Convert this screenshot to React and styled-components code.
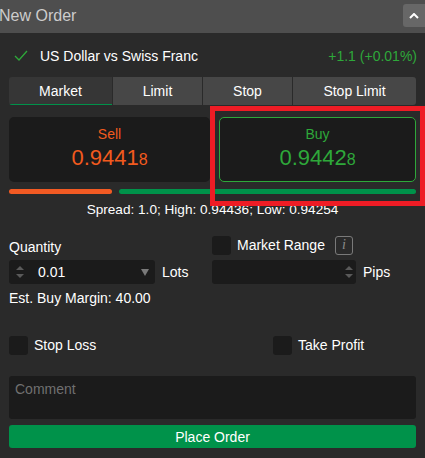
import React from 'react'
import styled, {createGlobalStyle} from 'styled-components'

const GlobalStyle = createGlobalStyle`
  html, body {
    margin: 0;
    padding: 0;
    background: #2a2a2a;
    font-family: "Liberation Sans", Arial, sans-serif;
  }
`

const Panel = styled.div`
  position: relative;
  width: 425px;
  height: 458px;
  background: #2a2a2a;
  color: #ffffff;
  overflow: hidden;
`

const Header = styled.div`
  height: 33px;
  background: #4e4e4e;
  display: flex;
  align-items: center;
  justify-content: space-between;
`

const HeaderTitle = styled.span`
  font-size: 16px;
  color: #cccccc;
  margin-left: -1px;
  margin-top: -1px;
`

const CollapseButton = styled.div`
  width: 22px;
  height: 23px;
  margin-top: -2px;
  background: #676767;
  border-radius: 3px 0 0 3px;
  display: flex;
  align-items: center;
  justify-content: center;
`

const Body = styled.div`
  padding: 0 9px;
`

const PairRow = styled.div`
  height: 44px;
  display: flex;
  align-items: center;
  padding-top: 2px;
  box-sizing: border-box;
`

const PairName = styled.span`
  font-size: 14px;
  margin-left: 12px;
  flex: 1;
`

const Change = styled.span`
  font-size: 14px;
  color: #2ea83a;
  margin-right: -1px;
`

const Tabs = styled.div`
  display: flex;
  gap: 1px;
  height: 28px;
  border-radius: 3px;
  overflow: hidden;
`

const Tab = styled.div`
  width: ${props => props.w}px;
  display: flex;
  align-items: center;
  justify-content: center;
  font-size: 14px;
  background: ${props => props.active ? '#363636' : '#474747'};
  box-shadow: ${props => props.active ? 'inset 0 -1px 0 #00924a' : 'none'};
`

const Prices = styled.div`
  display: flex;
  gap: 9px;
  margin-top: 12px;
`

const PriceBox = styled.div`
  flex: ${props => props.grow};
  height: 65px;
  box-sizing: border-box;
  background: #1b1b1b;
  border-radius: 5px;
  border: 1px solid ${props => props.selected ? '#2ea83a' : 'transparent'};
  color: ${props => props.color};
  display: flex;
  flex-direction: column;
  align-items: center;
  padding-top: 8px;
`

const Side = styled.div`
  font-size: 14px;
`

const Price = styled.div`
  font-size: 22px;
  margin-top: 3px;
`

const PipDigit = styled.span`
  font-size: 16px;
`

const Bars = styled.div`
  display: flex;
  gap: 7px;
  margin-top: 7px;
`

const Bar = styled.div`
  height: 5px;
  border-radius: 3px;
  background: ${props => props.color};
  width: ${props => props.w}px;
  flex: ${props => props.w ? 'none' : '1'};
`

const Spread = styled.div`
  text-align: center;
  font-size: 13.6px;
  margin-top: 8px;
`

const FormGrid = styled.div`
  display: grid;
  grid-template-columns: 203px 1fr;
  margin-top: 18px;
`

const Column = styled.div`
  display: flex;
  flex-direction: column;
`

const Label = styled.div`
  font-size: 14px;
  height: 20px;
  display: flex;
  align-items: flex-end;
  box-sizing: border-box;
`

const CheckRow = styled.label`
  display: flex;
  align-items: center;
  gap: 6px;
  font-size: 14px;
  height: 20px;
  white-space: nowrap;
`

const Box = styled.span`
  width: 19px;
  height: 19px;
  border-radius: 3px;
  background: #1b1b1b;
  flex: none;
`

const InfoIcon = styled.span`
  width: 16px;
  height: 17px;
  border: 1px solid #7a7a7a;
  border-radius: 3px;
  color: #8a8a8a;
  font-family: "Liberation Serif", serif;
  font-style: italic;
  font-size: 14px;
  display: flex;
  align-items: center;
  justify-content: center;
  margin-left: 4px;
`

const InputRow = styled.div`
  display: flex;
  align-items: center;
  margin-top: 5px;
  height: 24px;
`

const Input = styled.div`
  width: ${props => props.w}px;
  height: 24px;
  background: #1b1b1b;
  border-radius: 3px;
  display: flex;
  align-items: center;
  justify-content: ${props => props.end ? 'flex-end' : 'flex-start'};
  padding: 0 ${props => props.end ? 2 : 6}px 0 6px;
  box-sizing: border-box;
  font-size: 14px;
`

const InputValue = styled.span`
  flex: 1;
  margin-left: 13px;
`

const Unit = styled.span`
  font-size: 14px;
  margin-left: 7px;
`

const Margin = styled.div`
  font-size: 14px;
  margin-top: 6px;
`

const ProtectRow = styled.div`
  display: grid;
  grid-template-columns: 264px 1fr;
  margin-top: 29px;
`

const Comment = styled.div`
  margin-top: 21px;
  height: 43px;
  background: #1b1b1b;
  border-radius: 3px;
  color: #707070;
  font-size: 14px;
  padding: 5px 6px;
  box-sizing: border-box;
`

const PlaceButton = styled.div`
  margin-top: 6px;
  height: 23px;
  background: #00924a;
  border-radius: 3px;
  display: flex;
  align-items: center;
  justify-content: center;
  font-size: 14px;
`

const Highlight = styled.div`
  position: absolute;
  left: 210px;
  top: 106px;
  width: 215px;
  height: 100px;
  border: 5px solid #ee1c25;
  box-sizing: border-box;
  pointer-events: none;
`

const Spinner = () => (
  <svg width="10" height="16" viewBox="0 0 10 16">
    <path d="M1 6 L5 2 L9 6 Z" fill="#5a5a5a"/>
    <path d="M1 10 L5 14 L9 10 Z" fill="#5a5a5a"/>
  </svg>
)

export default function App() {
  return (
    <Panel>
      <GlobalStyle/>
      <Header>
        <HeaderTitle>New Order</HeaderTitle>
        <CollapseButton>
          <svg width="10" height="6" viewBox="0 0 10 6">
            <path d="M1 5 L5 1 L9 5" fill="none" stroke="#ffffff" strokeWidth="2"/>
          </svg>
        </CollapseButton>
      </Header>
      <Body>
        <PairRow>
          <svg width="14" height="12" viewBox="0 0 14 12" style={{marginLeft: 5}}>
            <path d="M1 6 L5 10 L13 1" fill="none" stroke="#2ea83a" strokeWidth="1.3"/>
          </svg>
          <PairName>US Dollar vs Swiss Franc</PairName>
          <Change>+1.1 (+0.01%)</Change>
        </PairRow>
        <Tabs>
          <Tab w={103} active>Market</Tab>
          <Tab w={89}>Limit</Tab>
          <Tab w={89}>Stop</Tab>
          <Tab w={123}>Stop Limit</Tab>
        </Tabs>
        <Prices>
          <PriceBox grow={201} color="#f25a1e">
            <Side>Sell</Side>
            <Price>0.9441<PipDigit>8</PipDigit></Price>
          </PriceBox>
          <PriceBox grow={197} color="#2ea83a" selected>
            <Side>Buy</Side>
            <Price>0.9442<PipDigit>8</PipDigit></Price>
          </PriceBox>
        </Prices>
        <Bars>
          <Bar color="#f25a23" w={103}/>
          <Bar color="#00924a"/>
        </Bars>
        <Spread>Spread: 1.0; High: 0.94436; Low: 0.94254</Spread>
        <FormGrid>
          <Column>
            <Label>Quantity</Label>
            <InputRow>
              <Input w={146}>
                <Spinner/>
                <InputValue>0.01</InputValue>
                <svg width="8" height="8" viewBox="0 0 8 8">
                  <path d="M0 1 L8 1 L4 8 Z" fill="#7a7a7a"/>
                </svg>
              </Input>
              <Unit>Lots</Unit>
            </InputRow>
            <Margin>Est. Buy Margin: 40.00</Margin>
          </Column>
          <Column>
            <CheckRow>
              <Box/>
              <span>Market Range</span>
              <InfoIcon>i</InfoIcon>
            </CheckRow>
            <InputRow>
              <Input w={144} end>
                <Spinner/>
              </Input>
              <Unit>Pips</Unit>
            </InputRow>
          </Column>
        </FormGrid>
        <ProtectRow>
          <CheckRow><Box/><span>Stop Loss</span></CheckRow>
          <CheckRow><Box/><span>Take Profit</span></CheckRow>
        </ProtectRow>
        <Comment>Comment</Comment>
        <PlaceButton>Place Order</PlaceButton>
      </Body>
      <Highlight/>
    </Panel>
  )
}
